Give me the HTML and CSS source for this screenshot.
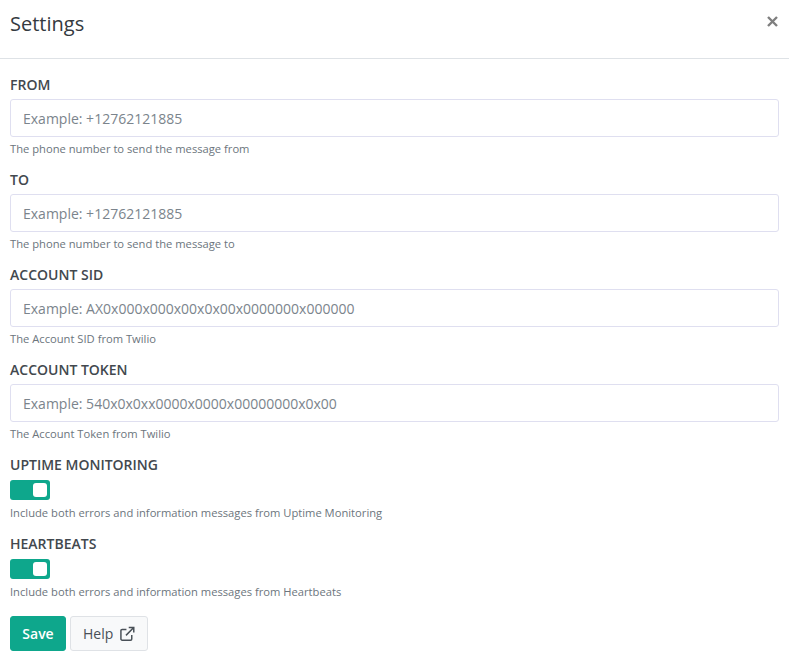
FILE: index.html
```html
<!DOCTYPE html>
<html lang="en">
<head>
  <meta charset="UTF-8" />
  <title>Settings</title>
  <link rel="stylesheet" href="styles.css">
</head>
<body>
  <div class="header">
    <h1>Settings</h1>
    <button class="close" aria-label="Close">
      <svg width="11" height="11" viewBox="0 0 11 11"><path d="M1 1l9 9M10 1l-9 9" stroke="#7f7f7f" stroke-width="2.4" fill="none"/></svg>
    </button>
  </div>
  <form class="form">
    <div class="group">
      <label>FROM</label>
      <input type="text" placeholder="Example: +12762121885">
      <p class="help">The phone number to send the message from</p>
    </div>
    <div class="group">
      <label>TO</label>
      <input type="text" placeholder="Example: +12762121885">
      <p class="help">The phone number to send the message to</p>
    </div>
    <div class="group">
      <label>ACCOUNT SID</label>
      <input type="text" placeholder="Example: AX0x000x000x00x0x00x0000000x000000">
      <p class="help">The Account SID from Twilio</p>
    </div>
    <div class="group">
      <label>ACCOUNT TOKEN</label>
      <input type="text" placeholder="Example: 540x0x0xx0000x0000x00000000x0x00">
      <p class="help">The Account Token from Twilio</p>
    </div>
    <div class="group">
      <label>UPTIME MONITORING</label>
      <div class="toggle"><span class="knob"></span></div>
      <p class="help">Include both errors and information messages from Uptime Monitoring</p>
    </div>
    <div class="group">
      <label>HEARTBEATS</label>
      <div class="toggle"><span class="knob"></span></div>
      <p class="help">Include both errors and information messages from Heartbeats</p>
    </div>
    <div class="actions">
      <button type="button" class="btn primary">Save</button>
      <button type="button" class="btn light">Help
        <svg width="16" height="16" viewBox="0 0 16 16" fill="none" stroke="#495057" stroke-width="1.6"><path d="M12.800 9v4.400a1.300 1.300 0 0 1-1.300 1.300H2.300a1.300 1.300 0 0 1-1.300-1.300V4.300a1.300 1.300 0 0 1 1.300-1.300H7"/><path d="M9.500 1h5.500v5.500M14.700 1.300L6.500 9.500"/></svg>
      </button>
    </div>
  </form>
</body>
</html>
```

FILE: styles.css
```css
* {
  box-sizing: border-box;
}
body {
  margin: 0;
  background: #fff;
  color: #343a40;
  font-family: "Open Sans", sans-serif;
}
.header {
  height: 59px;
  padding: 0 10px;
  border-bottom: 1px solid #dee2e6;
  display: flex;
  justify-content: space-between;
}
.header h1 {
  margin: 9px 0 0;
  font-size: 20px;
  font-weight: 400;
  line-height: 30px;
}
.close {
  background: none;
  border: none;
  padding: 0;
  margin: 16px 1px 0 0;
  height: 11px;
  line-height: 0;
}
.form {
  padding: 15px 10px 0;
}
.group {
  margin-bottom: 12px;
}
label {
  display: block;
  font-size: 14px;
  font-weight: 600;
  line-height: 21px;
  margin-bottom: 4px;
  color: #42484e;
}
input {
  display: block;
  width: 100%;
  height: 38px;
  padding: 0 12px;
  border: 1px solid #dfdff0;
  border-radius: 3px;
  font-family: inherit;
  font-size: 14px;
}
input::placeholder {
  color: #7b848c;
  opacity: 1;
}
.help {
  margin: 4px 0 0;
  font-size: 11.2px;
  line-height: 16px;
  color: #6c757d;
}
.toggle {
  width: 40px;
  height: 20px;
  margin-top: 5px;
  padding: 3px;
  border-radius: 3px;
  background: #0ea78c;
  display: flex;
  justify-content: flex-end;
}
.knob {
  width: 14px;
  height: 14px;
  border-radius: 3px;
  background: #fff;
}
.toggle + .help {
  margin-top: 5px;
}
.actions {
  display: flex;
  gap: 4px;
  margin-top: 16px;
}
.btn {
  height: 35px;
  border-radius: 3px;
  font-family: inherit;
  font-size: 14px;
  display: flex;
  align-items: center;
  gap: 7px;
  cursor: pointer;
}
.primary {
  width: 56px;
  padding: 0;
  justify-content: center;
  border: 1px solid #0ea78c;
  background: #0ea78c;
  color: #fff;
  font-weight: 600;
}
.light {
  width: 78px;
  padding: 0 12px;
  border: 1px solid #dfe2e6;
  background: #f8f9fa;
  color: #495057;
}
```
